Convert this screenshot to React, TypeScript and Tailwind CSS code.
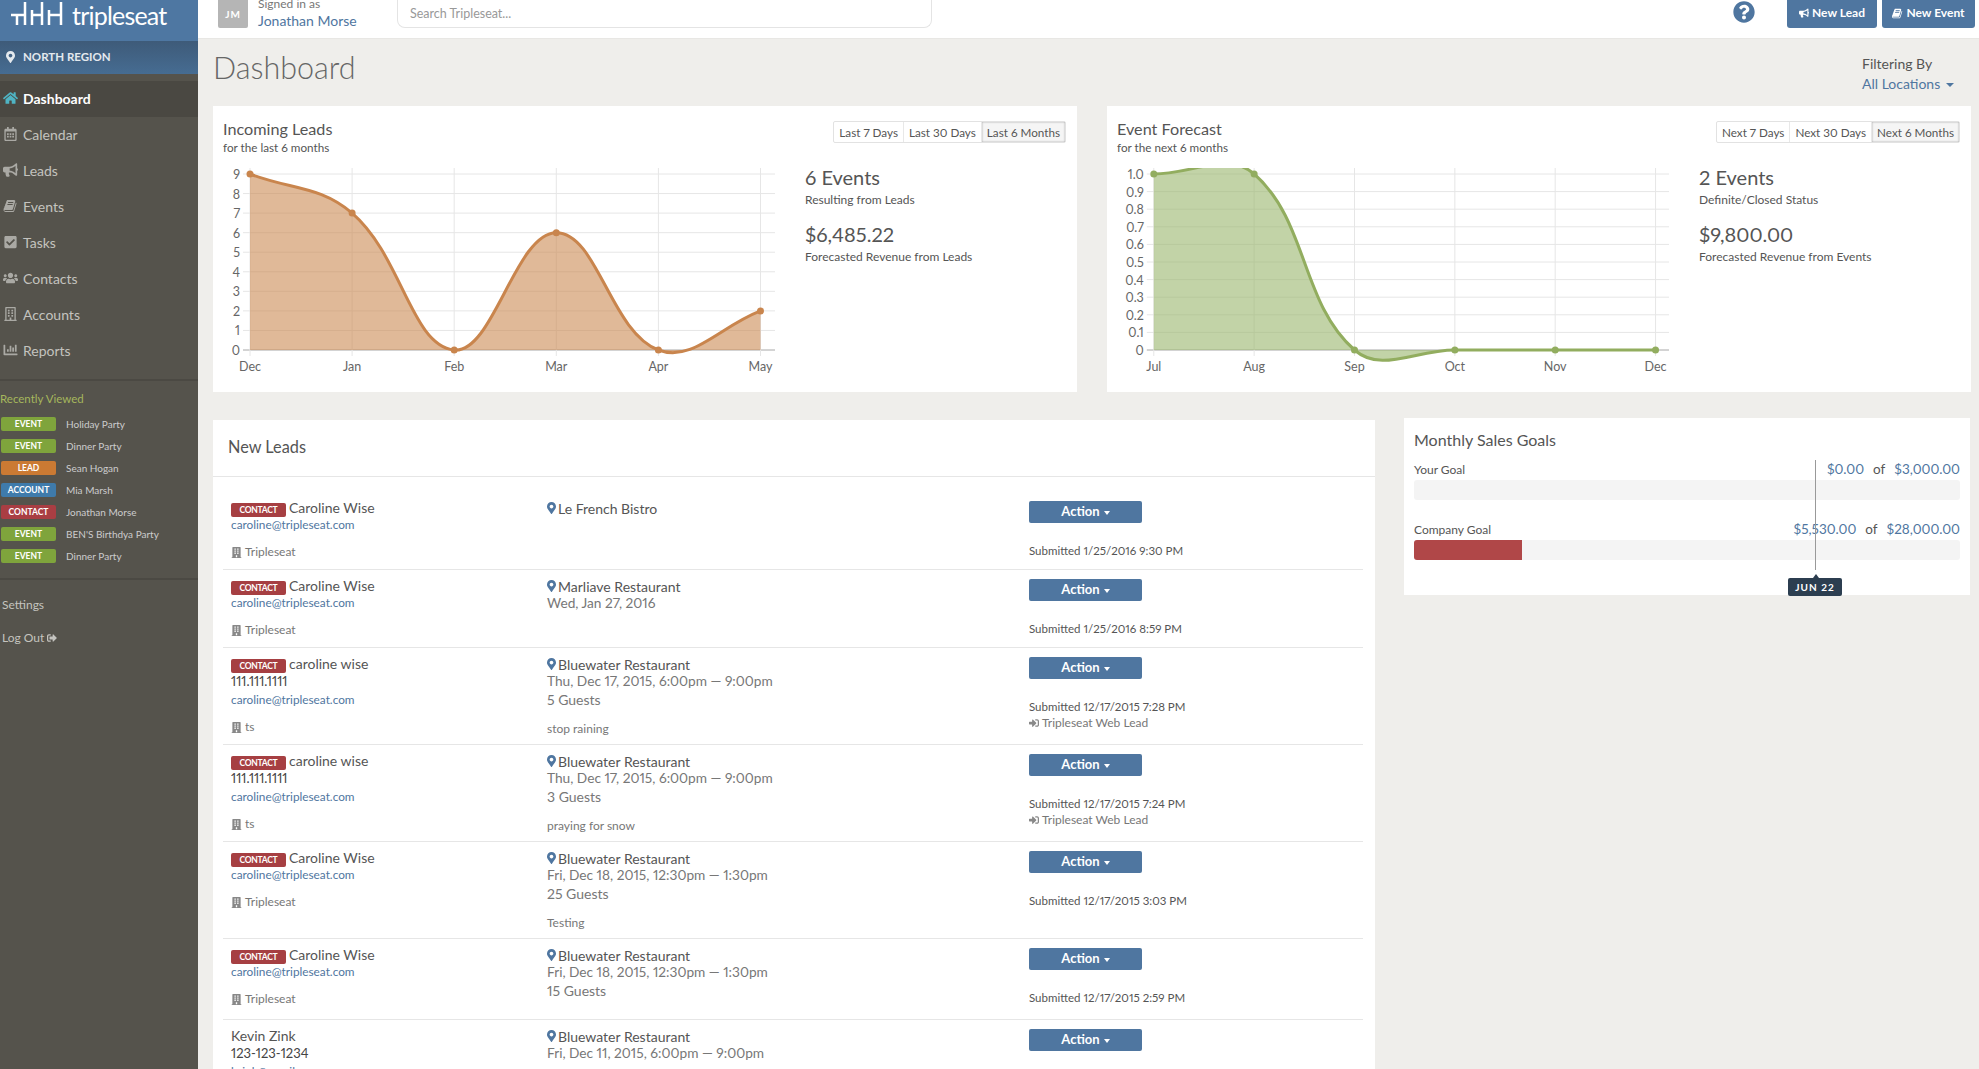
import {
  FaBuilding,
  FaBullhorn,
  FaChartBar,
  FaCheckSquare,
  FaHome,
  FaMapMarkerAlt,
  FaQuestionCircle,
  FaRegBuilding,
  FaRegCalendarAlt,
  FaSignInAlt,
  FaSignOutAlt,
  FaUsers,
} from 'react-icons/fa'

function BookIcon({ className }: { className?: string }) {
  return (
    <svg viewBox="0 0 1792 1792" fill="currentColor" width="1em" height="1em" className={className}>
      <path d="M1639 478q40 57 18 129l-275 906q-19 64-76.500 107.500t-122.500 43.500h-923q-77 0-148.500-53.500t-99.500-131.500q-24-67-2-127 0-4 3-27t4-37q1-8-3-21.500t-3-19.500q2-11 8-21t16.500-23.500 16.500-23.500q23-38 45-91.500t30-91.500q3-10 .5-30t-.5-28q3-11 17-28t17-23q21-36 42-92t25-90q1-9-2.500-32t.5-28q4-13 22-30.500t22-22.500q19-26 42.500-84.500t27.500-96.500q1-8-3-25.500t-2-26.500q2-8 9-18t18-23 17-21q8-12 16.500-30.500t15-35 16-36 19.500-32 26.500-23.500 36-11.500 47.500 5.500l-1 3q38-9 51-9h761q74 0 114 56t18 130l-274 906q-36 119-71.500 153.500t-128.500 34.500h-869q-27 0-38 15-11 16-1 43 24 70 144 70h923q29 0 56-15.500t35-41.500l300-987q7-22 5-57 38 15 59 43zm-1064 2q-4 13 2 22.500t20 9.500h608q13 0 25.500-9.500t16.500-22.500l21-64q4-13-2-22.500t-20-9.500h-608q-13 0-25.500 9.500t-16.500 22.500zm-83 256q-4 13 2 22.500t20 9.500h608q13 0 25.500-9.500t16.500-22.500l21-64q4-13-2-22.500t-20-9.500h-608q-13 0-25.500 9.500t-16.500 22.500z" />
    </svg>
  )
}

const nav = [
  { label: 'Dashboard', icon: FaHome, active: true },
  { label: 'Calendar', icon: FaRegCalendarAlt },
  { label: 'Leads', icon: FaBullhorn },
  { label: 'Events', icon: BookIcon },
  { label: 'Tasks', icon: FaCheckSquare },
  { label: 'Contacts', icon: FaUsers },
  { label: 'Accounts', icon: FaRegBuilding },
  { label: 'Reports', icon: FaChartBar },
]

const recent = [
  { tag: 'EVENT', color: 'bg-[#7fa43c]', name: 'Holiday Party' },
  { tag: 'EVENT', color: 'bg-[#7fa43c]', name: 'Dinner Party' },
  { tag: 'LEAD', color: 'bg-[#cb7a33]', name: 'Sean Hogan' },
  { tag: 'ACCOUNT', color: 'bg-[#3f7bab]', name: 'Mia Marsh' },
  { tag: 'CONTACT', color: 'bg-[#a93e43]', name: 'Jonathan Morse' },
  { tag: 'EVENT', color: 'bg-[#7fa43c]', name: "BEN'S Birthdya Party" },
  { tag: 'EVENT', color: 'bg-[#7fa43c]', name: 'Dinner Party' },
]

type Lead = {
  height: string
  name: string
  tag?: boolean
  phone?: string
  email?: string
  company?: string
  venue: string
  date?: string
  guests?: string
  note?: string
  submitted?: string
  web?: boolean
}

const leads: Lead[] = [
  {
    height: 'h-[78px]',
    name: 'Caroline Wise',
    tag: true,
    email: 'caroline@tripleseat.com',
    company: 'Tripleseat',
    venue: 'Le French Bistro',
    submitted: 'Submitted 1/25/2016 9:30 PM',
  },
  {
    height: 'h-[78px]',
    name: 'Caroline Wise',
    tag: true,
    email: 'caroline@tripleseat.com',
    company: 'Tripleseat',
    venue: 'Marliave Restaurant',
    date: 'Wed, Jan 27, 2016',
    submitted: 'Submitted 1/25/2016 8:59 PM',
  },
  {
    height: 'h-[97px]',
    name: 'caroline wise',
    tag: true,
    phone: '111.111.1111',
    email: 'caroline@tripleseat.com',
    company: 'ts',
    venue: 'Bluewater Restaurant',
    date: 'Thu, Dec 17, 2015, 6:00pm — 9:00pm',
    guests: '5 Guests',
    note: 'stop raining',
    submitted: 'Submitted 12/17/2015 7:28 PM',
    web: true,
  },
  {
    height: 'h-[97px]',
    name: 'caroline wise',
    tag: true,
    phone: '111.111.1111',
    email: 'caroline@tripleseat.com',
    company: 'ts',
    venue: 'Bluewater Restaurant',
    date: 'Thu, Dec 17, 2015, 6:00pm — 9:00pm',
    guests: '3 Guests',
    note: 'praying for snow',
    submitted: 'Submitted 12/17/2015 7:24 PM',
    web: true,
  },
  {
    height: 'h-[97px]',
    name: 'Caroline Wise',
    tag: true,
    email: 'caroline@tripleseat.com',
    company: 'Tripleseat',
    venue: 'Bluewater Restaurant',
    date: 'Fri, Dec 18, 2015, 12:30pm — 1:30pm',
    guests: '25 Guests',
    note: 'Testing',
    submitted: 'Submitted 12/17/2015 3:03 PM',
  },
  {
    height: 'h-[81px]',
    name: 'Caroline Wise',
    tag: true,
    email: 'caroline@tripleseat.com',
    company: 'Tripleseat',
    venue: 'Bluewater Restaurant',
    date: 'Fri, Dec 18, 2015, 12:30pm — 1:30pm',
    guests: '15 Guests',
    submitted: 'Submitted 12/17/2015 2:59 PM',
  },
  {
    height: 'h-[97px]',
    name: 'Kevin Zink',
    phone: '123-123-1234',
    email: 'kzink@gmail.com',
    venue: 'Bluewater Restaurant',
    date: 'Fri, Dec 11, 2015, 6:00pm — 9:00pm',
  },
]

// same bezier smoothing the chart library uses (tension 0.4)
function smoothPath(pts: number[][]) {
  const ctrl = pts.map((p, i) => {
    const a = pts[i - 1] ?? p
    const b = pts[i + 1] ?? p
    const d1 = Math.hypot(p[0] - a[0], p[1] - a[1])
    const d2 = Math.hypot(b[0] - p[0], b[1] - p[1])
    const total = d1 + d2 || 1
    const fa = (0.4 * d1) / total
    const fb = (0.4 * d2) / total
    return {
      inn: [p[0] - fa * (b[0] - a[0]), p[1] - fa * (b[1] - a[1])],
      out: [p[0] + fb * (b[0] - a[0]), p[1] + fb * (b[1] - a[1])],
    }
  })
  let d = `M${pts[0][0]} ${pts[0][1]}`
  for (let i = 1; i < pts.length; i++) {
    d += ` C${ctrl[i - 1].out[0]} ${ctrl[i - 1].out[1]} ${ctrl[i].inn[0]} ${ctrl[i].inn[1]} ${pts[i][0]} ${pts[i][1]}`
  }
  return d
}

function Chart(props: {
  id: string
  x0: number
  step: number
  max: number
  ticks: string[]
  labels: string[]
  values: number[]
  stroke: string
  fill: string
}) {
  const top = 14
  const bottom = 190
  const right = 552
  const { x0, step, max, ticks, labels, values } = props
  const toY = (v: number) => bottom - (v / max) * (bottom - top)
  const pts = values.map((v, i) => [x0 + i * step, toY(v)])
  const line = smoothPath(pts)
  const area = `${line} L${pts[pts.length - 1][0]} ${bottom} L${x0} ${bottom} Z`

  return (
    <svg width="582" height="220" className="shrink-0">
      <defs>
        <clipPath id={props.id}>
          <rect x="0" y="8" width="582" height="212" />
        </clipPath>
      </defs>
      {ticks.map((t, i) => {
        const y = bottom - (i / (ticks.length - 1)) * (bottom - top)
        return (
          <g key={t}>
            <line x1={x0 - 7} x2={right} y1={y} y2={y} stroke={i === 0 ? '#a8a8a8' : '#e6e6e6'} />
            <text x={x0 - 10} y={y + 5} textAnchor="end" fontSize="12.5" fill="#666">
              {t}
            </text>
          </g>
        )
      })}
      {labels.map((l, i) => (
        <g key={l}>
          <line x1={x0 + i * step} x2={x0 + i * step} y1="8" y2={bottom + 6} stroke="#e6e6e6" />
          <text x={x0 + i * step} y="211" textAnchor="middle" fontSize="12.5" fill="#666">
            {l}
          </text>
        </g>
      ))}
      <g clipPath={`url(#${props.id})`}>
        <path d={area} fill={props.fill} fillOpacity="0.6" />
        <path d={line} fill="none" stroke={props.stroke} strokeWidth="3" />
        {pts.map((p) => (
          <circle key={p[0]} cx={p[0]} cy={p[1]} r="3.5" fill={props.stroke} />
        ))}
      </g>
    </svg>
  )
}

function ChartCard(props: {
  title: string
  sub: string
  ranges: string[]
  count: string
  countLabel: string
  money: string
  moneyLabel: string
  chart: React.ReactNode
}) {
  return (
    <div className="h-[286px] w-[864px] bg-white pt-[13px] pl-[10px] pr-[11px]">
      <div className="flex justify-between">
        <div>
          <div className="h-[19px] text-[16.2px] leading-[19px] text-[#555]">{props.title}</div>
          <div className="h-[19px] text-[11.7px] leading-[19px] text-[#555]">{props.sub}</div>
        </div>
        <div className="mt-[2px] flex h-[22px] rounded-[2px] border border-[#e2e2e2] text-[11.7px] leading-[20px] text-[#555]">
          {props.ranges.map((r, i) => (
            <div
              key={r}
              className={
                i === 2
                  ? 'bg-[#f5f5f5] px-[5px] shadow-[inset_0_0_2px_#999]'
                  : 'border-r border-[#e8e8e8] px-[5px]'
              }
            >
              {r}
            </div>
          ))}
        </div>
      </div>
      <div className="mt-[3px] flex">
        {props.chart}
        <div className="pt-[5px] text-[#555]">
          <div className="h-[24px] text-[20px] leading-[24px]">{props.count}</div>
          <div className="h-[21px] text-[12px] leading-[21px]">{props.countLabel}</div>
          <div className="mt-[12px] h-[24px] text-[20px] leading-[24px]">{props.money}</div>
          <div className="h-[21px] text-[12px] leading-[21px]">{props.moneyLabel}</div>
        </div>
      </div>
    </div>
  )
}

function LeadRow({ lead }: { lead: Lead }) {
  return (
    <div className={`${lead.height} grid shrink-0 grid-cols-[316px_482px_1fr] border-b border-[#e6e6e6] pl-[8px]`}>
      <div className="pt-[6px]">
        <div className="flex h-[18px] items-center text-[14px] text-[#555]">
          {lead.tag && (
            <span className="mt-[6px] mr-[3px] flex h-[14px] w-[55px] items-center justify-center rounded-[2px] bg-[#a63f42] text-[8.5px] font-bold tracking-[-0.3px] text-white">
              CONTACT
            </span>
          )}
          {lead.name}
        </div>
        {lead.phone && <div className="h-[18px] text-[13px] leading-[18px] text-[#444]">{lead.phone}</div>}
        <div className={`${lead.phone ? 'mt-[1px]' : ''} h-[18px] text-[11.8px] leading-[18px] text-[#4f76a0]`}>
          {lead.email}
        </div>
        {lead.company && (
          <div className="mt-[9px] flex h-[18px] items-center gap-[3px] text-[12px] text-[#777]">
            <FaBuilding className="text-[11px] text-[#888]" />
            {lead.company}
          </div>
        )}
      </div>
      <div className="pt-[7px]">
        <div className="flex h-[18px] items-center gap-[2px] text-[14px] text-[#555]">
          <FaMapMarkerAlt className="w-[9px] text-[12px] text-[#4f76a0]" />
          {lead.venue}
        </div>
        {lead.date && <div className="h-[16px] text-[13.7px] leading-[16px] text-[#777]">{lead.date}</div>}
        {lead.guests && <div className="mt-[2px] h-[18px] text-[14px] leading-[18px] text-[#777]">{lead.guests}</div>}
        {lead.note && <div className="mt-[11px] h-[18px] text-[12px] leading-[18px] text-[#777]">{lead.note}</div>}
      </div>
      <div className="pt-[9px]">
        <button className="flex h-[22px] w-[113px] items-center justify-center gap-[4px] rounded-[2px] bg-[#4f76a0] text-[13px] font-bold text-white">
          Action
          <span className="mt-[2px] border-x-[3px] border-t-[4px] border-x-transparent border-t-white" />
        </button>
        {lead.submitted && (
          <div className="mt-[20px] h-[16px] text-[11.5px] leading-[16px] text-[#555]">{lead.submitted}</div>
        )}
        {lead.web && (
          <div className="flex h-[16px] items-center gap-[3px] text-[12px] text-[#777]">
            <FaSignInAlt className="text-[10px] text-[#888]" />
            Tripleseat Web Lead
          </div>
        )}
      </div>
    </div>
  )
}

function Goal(props: { label: string; current: string; total: string; percent?: string }) {
  return (
    <>
      <div className="flex h-[18px] items-center justify-between">
        <span className="text-[12px] text-[#555]">{props.label}</span>
        <span className="-mt-[1px] text-[13.5px] text-[#4f76a0]">
          {props.current}
          <span className="mx-[9px] text-[#555]">of</span>
          {props.total}
        </span>
      </div>
      <div className="mt-[1px] h-[20px] overflow-hidden rounded-[3px] bg-[#f4f4f4]">
        {props.percent && <div className={`h-full ${props.percent} bg-[#b04748]`} />}
      </div>
    </>
  )
}

export default function App() {
  return (
    <div className="flex h-screen overflow-hidden bg-[#efeeeb] font-['Lato','Open_Sans',sans-serif] proportional-nums">
      <aside className="w-[198px] shrink-0 bg-[#55534c]">
        <div className="flex h-[41px] items-start bg-[#4e77a2] pl-[11px]">
          <svg width="52" height="26" viewBox="0 0 52 26" fill="none" stroke="white" strokeWidth="2.5">
            <path d="M0 15H14M6 15V25M14 2V25M21 10V25M21 15H31M31 2V25M38 10V25M38 15H50M50 2V25" />
          </svg>
          <span className="ml-[9px] text-[25px] leading-[30px] tracking-[-0.8px] text-white">tripleseat</span>
        </div>
        <div className="flex h-[33px] items-center bg-linear-to-b from-[#3e5b79] to-[#466c92] pb-[1px] pl-[6px] text-[11.5px] font-bold text-[#e4e9ee]">
          <FaMapMarkerAlt className="w-[9px] text-[12px]" />
          <span className="ml-[8px]">NORTH REGION</span>
        </div>
        <nav className="mt-[7px] border-b-2 border-[#4b4943] pb-[10px]">
          {nav.map((item) => (
            <div
              key={item.label}
              className={
                item.active
                  ? 'flex h-[36px] items-center bg-[#4a4842] pb-[2px] pl-[3px] text-[14px] font-bold text-white'
                  : 'flex h-[36px] items-center pb-[2px] pl-[3px] text-[14px] text-[#c4c3bf]'
              }
            >
              <item.icon className={item.active ? 'w-[15px] text-[14px] text-[#4fb4c4]' : 'w-[15px] text-[14px] text-[#aaa9a4]'} />
              <span className="ml-[5px]">{item.label}</span>
            </div>
          ))}
        </nav>
        <div className="mt-[10px] h-[16px] text-[11.5px] leading-[16px] text-[#a5b75c]">Recently Viewed</div>
        <div className="mt-[6px] border-b-2 border-[#4b4943] pb-[11px]">
          {recent.map((r, i) => (
            <div key={i} className="flex h-[22px] items-center pl-[1px]">
              <span
                className={`${r.color} flex h-[14px] w-[55px] items-center justify-center rounded-[2px] text-[8.5px] font-bold text-white`}
              >
                {r.tag}
              </span>
              <span className="ml-[10px] text-[10px] text-[#ccc]">{r.name}</span>
            </div>
          ))}
        </div>
        <div className="mt-[16px] h-[18px] pl-[2px] text-[12px] leading-[18px] text-[#c4c3bf]">Settings</div>
        <div className="mt-[15px] flex h-[18px] items-center gap-[3px] pl-[2px] text-[12px] text-[#c4c3bf]">
          Log Out
          <FaSignOutAlt className="text-[10px]" />
        </div>
      </aside>

      <main className="min-w-0 flex-1">
        <header className="flex h-[39px] items-start border-b border-[#e8e7e4] bg-white pl-[20px] pr-[4px]">
          <div className="flex h-[28px] w-[30px] items-center justify-center rounded-b-[2px] bg-[#b5b5b5] text-[10px] font-bold tracking-[1px] text-white">
            JM
          </div>
          <div className="ml-[10px] w-[139px]">
            <div className="-mt-[3px] h-[13px] text-[12px] leading-[13px] text-[#777]">Signed in as</div>
            <div className="mt-[2px] h-[18px] text-[14px] leading-[18px] text-[#4f76a0]">Jonathan Morse</div>
          </div>
          <input
            placeholder="Search Tripleseat..."
            className="h-[28px] w-[535px] rounded-b-[8px] border border-t-0 border-[#e4e4e4] pl-[12px] text-[12.5px] placeholder:text-[#999]"
          />
          <FaQuestionCircle className="mt-[1px] ml-auto text-[22px] text-[#4f76a0]" />
          <button className="ml-[32px] flex h-[28px] w-[90px] items-center justify-center gap-[3px] rounded-b-[3px] bg-[#4f76a0] pb-[2px] text-[12px] font-bold text-white">
            <FaBullhorn className="text-[10px]" />
            New Lead
          </button>
          <button className="ml-[5px] flex h-[28px] w-[93px] items-center justify-center gap-[3px] rounded-b-[3px] bg-[#4f76a0] pb-[2px] text-[12px] font-bold text-white">
            <BookIcon className="text-[11px]" />
            New Event
          </button>
        </header>

        <div className="pl-[15px] pr-[8px]">
          <div className="flex h-[67px] justify-between">
            <h1 className="pt-[8px] text-[30.5px] leading-[40px] font-light text-[#666]">Dashboard</h1>
            <div className="w-[109px] pt-[15px] text-[14px] leading-[20px]">
              <div className="text-[#555]">Filtering By</div>
              <div className="flex items-center gap-[6px] text-[#4f76a0]">
                All Locations
                <span className="mt-[2px] border-x-[4px] border-t-[4px] border-x-transparent border-t-[#4f76a0]" />
              </div>
            </div>
          </div>

          <div className="flex gap-[30px]">
            <ChartCard
              title="Incoming Leads"
              sub="for the last 6 months"
              ranges={['Last 7 Days', 'Last 30 Days', 'Last 6 Months']}
              count="6 Events"
              countLabel="Resulting from Leads"
              money="$6,485.22"
              moneyLabel="Forecasted Revenue from Leads"
              chart={
                <Chart
                  id="leads"
                  x0={27}
                  step={102.1}
                  max={9}
                  ticks={['0', '1', '2', '3', '4', '5', '6', '7', '8', '9']}
                  labels={['Dec', 'Jan', 'Feb', 'Mar', 'Apr', 'May']}
                  values={[9, 7, 0, 6, 0, 2]}
                  stroke="#c9854d"
                  fill="#cb8a54"
                />
              }
            />
            <ChartCard
              title="Event Forecast"
              sub="for the next 6 months"
              ranges={['Next 7 Days', 'Next 30 Days', 'Next 6 Months']}
              count="2 Events"
              countLabel="Definite/Closed Status"
              money="$9,800.00"
              moneyLabel="Forecasted Revenue from Events"
              chart={
                <Chart
                  id="events"
                  x0={36.8}
                  step={100.35}
                  max={1}
                  ticks={['0', '0.1', '0.2', '0.3', '0.4', '0.5', '0.6', '0.7', '0.8', '0.9', '1.0']}
                  labels={['Jul', 'Aug', 'Sep', 'Oct', 'Nov', 'Dec']}
                  values={[1, 1, 0, 0, 0, 0]}
                  stroke="#92ad5f"
                  fill="#9ab56c"
                />
              }
            />
          </div>

          <div className="mt-[26px] flex items-start gap-[29px]">
            <section className="mt-[2px] w-[1162px] bg-white">
              <div className="flex h-[57px] items-center border-b border-[#e6e6e6] pb-[2px] pl-[15px] text-[16.3px] text-[#555]">
                New Leads
              </div>
              <div className="mt-[15px] ml-[10px] mr-[12px] flex flex-col">
                {leads.map((lead, i) => (
                  <LeadRow key={i} lead={lead} />
                ))}
              </div>
            </section>

            <section className="relative h-[177px] w-[566px] bg-white px-[10px] pt-[12px]">
              <div className="h-[21px] text-[16px] leading-[20px] text-[#555]">Monthly Sales Goals</div>
              <div className="mt-[10px]">
                <Goal label="Your Goal" current="$0.00" total="$3,000.00" />
              </div>
              <div className="mt-[21px]">
                <Goal label="Company Goal" current="$5,530.00" total="$28,000.00" percent="w-[108px]" />
              </div>
              <div className="absolute top-[42px] left-[411px] h-[110px] w-px bg-[#999]" />
              <div className="absolute top-[160px] left-[384px] flex h-[18px] w-[54px] items-center justify-center rounded-[2px] bg-[#2c3e50] text-[10px] font-bold tracking-[1px] text-white">
                <span className="absolute -top-[4px] left-[25px] border-x-[3px] border-b-[4px] border-x-transparent border-b-[#2c3e50]" />
                JUN 22
              </div>
            </section>
          </div>
        </div>
      </main>
    </div>
  )
}
